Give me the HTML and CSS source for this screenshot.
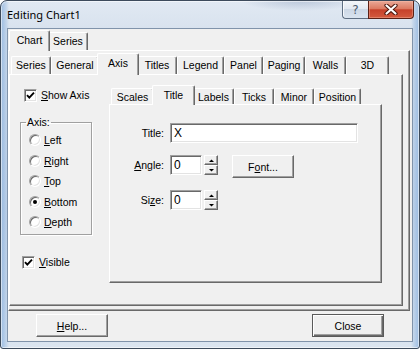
FILE: index.html
```html
<!DOCTYPE html>
<html>
<head>
<meta charset="utf-8">
<title>Editing Chart1</title>
<link rel="stylesheet" href="styles.css">
</head>
<body>
<div class="window">
  <div class="titlebar">
    <span class="title">Editing Chart1</span>
    <div class="caption">
      <div class="cap-btn cap-help">?</div>
      <div class="cap-btn cap-close">
        <svg width="14" height="11" viewBox="0 0 14 11">
          <path d="M2.5 1.5 L11.5 9.5 M11.5 1.5 L2.5 9.5" stroke="#4d160c" stroke-width="4.2" stroke-linecap="round" fill="none"/>
          <path d="M2.5 1.5 L11.5 9.5 M11.5 1.5 L2.5 9.5" stroke="#ffffff" stroke-width="2.2" stroke-linecap="round" fill="none"/>
        </svg>
      </div>
    </div>
  </div>
  <div class="client">
    <div class="tc tc-outer">
      <div class="strip strip-outer">
        <div class="tab sel w-chart">Chart</div>
        <div class="tab w-series1">Series</div>
      </div>
      <div class="panel panel-outer">
        <div class="tc tc-mid">
          <div class="strip strip-mid">
            <div class="tab w-series2">Series</div>
            <div class="tab w-general">General</div>
            <div class="tab sel w-axis">Axis</div>
            <div class="tab w-titles">Titles</div>
            <div class="tab w-legend">Legend</div>
            <div class="tab w-panel">Panel</div>
            <div class="tab w-paging">Paging</div>
            <div class="tab w-walls">Walls</div>
            <div class="tab w-3d">3D</div>
          </div>
          <div class="panel panel-mid">
            <div class="left-col">
              <div class="check-row show-axis">
                <span class="checkbox"><svg width="11" height="11" viewBox="0 0 11 11"><path d="M2 5.2 L4.3 7.6 L9 2.6" stroke="#000" stroke-width="1.9" fill="none"/></svg></span>
                <span class="lbl"><u>S</u>how Axis</span>
              </div>
              <fieldset class="group">
                <legend>Axis:</legend>
                <div class="radio-row"><span class="radio"></span><span class="lbl"><u>L</u>eft</span></div>
                <div class="radio-row"><span class="radio"></span><span class="lbl"><u>R</u>ight</span></div>
                <div class="radio-row"><span class="radio"></span><span class="lbl"><u>T</u>op</span></div>
                <div class="radio-row"><span class="radio on"></span><span class="lbl"><u>B</u>ottom</span></div>
                <div class="radio-row"><span class="radio"></span><span class="lbl"><u>D</u>epth</span></div>
              </fieldset>
              <div class="check-row visible">
                <span class="checkbox"><svg width="11" height="11" viewBox="0 0 11 11"><path d="M2 5.2 L4.3 7.6 L9 2.6" stroke="#000" stroke-width="1.9" fill="none"/></svg></span>
                <span class="lbl"><u>V</u>isible</span>
              </div>
            </div>
            <div class="tc tc-inner">
              <div class="strip strip-inner">
                <div class="tab w-scales">Scales</div>
                <div class="tab sel w-title">Title</div>
                <div class="tab w-labels">Labels</div>
                <div class="tab w-ticks">Ticks</div>
                <div class="tab w-minor">Minor</div>
                <div class="tab w-position">Position</div>
              </div>
              <div class="panel panel-inner">
                <div class="form-row">
                  <span class="flabel">Title:</span>
                  <div class="field field-title">X</div>
                </div>
                <div class="form-row">
                  <span class="flabel"><u>A</u>ngle:</span>
                  <div class="field field-num">0</div>
                  <div class="spin">
                    <div class="spin-btn"><svg width="5" height="3" viewBox="0 0 5 3"><path d="M0 3 H5 L2.5 0.5 Z" fill="#000"/></svg></div>
                    <div class="spin-btn"><svg width="5" height="3" viewBox="0 0 5 3"><path d="M0 0 H5 L2.5 2.5 Z" fill="#000"/></svg></div>
                  </div>
                  <div class="btn btn-font">F<u>o</u>nt...</div>
                </div>
                <div class="form-row">
                  <span class="flabel">Si<u>z</u>e:</span>
                  <div class="field field-num">0</div>
                  <div class="spin">
                    <div class="spin-btn"><svg width="5" height="3" viewBox="0 0 5 3"><path d="M0 3 H5 L2.5 0.5 Z" fill="#000"/></svg></div>
                    <div class="spin-btn"><svg width="5" height="3" viewBox="0 0 5 3"><path d="M0 0 H5 L2.5 2.5 Z" fill="#000"/></svg></div>
                  </div>
                </div>
              </div>
            </div>
          </div>
        </div>
      </div>
    </div>
    <div class="buttons">
      <div class="btn btn-dlg"><u>H</u>elp...</div>
      <div class="btn btn-dlg default">Close</div>
    </div>
  </div>
</div>
</body>
</html>
```

FILE: styles.css
```css
* { box-sizing: border-box; }
html, body { margin: 0; padding: 0; }
body {
  width: 420px;
  height: 349px;
  overflow: hidden;
  background: #ffffff;
  font-family: "Liberation Sans", Arial, sans-serif;
  font-size: 10.5px;
  color: #000;
}

/* ---------- window frame ---------- */
.window {
  width: 420px;
  height: 349px;
  display: flex;
  flex-direction: column;
  border: 1px solid #3d4b5c;
  border-radius: 7px 7px 3px 3px;
  background:
    radial-gradient(ellipse 60px 10px at 300px 0, rgba(90, 115, 155, 0.28), rgba(90, 115, 155, 0)),
    linear-gradient(90deg, rgba(140, 178, 222, 0.8) 0, rgba(140, 178, 222, 0.25) 6px, rgba(140, 178, 222, 0) 8px, rgba(140, 178, 222, 0) 410px, rgba(140, 178, 222, 0.25) 412px, rgba(140, 178, 222, 0.8) 418px),
    linear-gradient(180deg, #e1e9f3 0, #d8e2ee 28px, #cbd9ea 60%, #dbe5f0 100%);
  box-shadow: inset 0 0 0 1px rgba(255, 255, 255, 0.55);
}
.titlebar {
  height: 27px;
  flex: none;
  display: flex;
  justify-content: space-between;
  align-items: flex-start;
}
.title {
  margin: 7px 0 0 6px;
  font-family: "Noto Sans", "Liberation Sans", sans-serif;
  font-size: 11px;
  line-height: 14px;
  color: #000;
}
.caption {
  display: flex;
  margin-right: 5px;
}
.cap-btn {
  height: 18px;
  display: flex;
  align-items: center;
  justify-content: center;
}
.cap-help {
  width: 26px;
  border: 1px solid #5f6f83;
  border-top: none;
  border-right: none;
  border-radius: 0 0 0 4px;
  background: linear-gradient(180deg, #f3f6fa 0, #e3e9f2 45%, #cdd8e6 50%, #d9e3ef 100%);
  color: #4a5a6e;
  font-family: "DejaVu Sans", sans-serif;
  font-size: 12px;
  line-height: 16px;
  box-shadow: inset 1px 0 0 rgba(255, 255, 255, 0.8);
}
.cap-close {
  width: 46px;
  border: 1px solid #5b2015;
  border-top: none;
  border-radius: 0 0 4px 0;
  background: linear-gradient(180deg, #eaa897 0, #dc7a62 45%, #c6412a 52%, #d35a3e 100%);
  box-shadow: inset 0 0 0 1px rgba(255, 200, 180, 0.35);
}

/* ---------- client area ---------- */
.client {
  flex: 1;
  margin: 0 6px 6px;
  background: #f0f0f0;
  border: 1px solid #8093aa;
  display: flex;
  flex-direction: column;
}

/* ---------- tab controls ---------- */
.tc {
  display: flex;
  flex-direction: column;
}
.tc-outer {
  height: 282px;
  margin-right: 2px;
  flex: none;
}
.tc-mid { flex: 1; }
.tc-inner {
  width: 273px;
  height: 198px;
  flex: none;
}
.strip {
  display: flex;
  align-items: flex-end;
  position: relative;
  z-index: 1;
  margin-bottom: -1px;
  flex: none;
}
.strip-outer { height: 22px; padding-left: 3px; }
.strip-mid { height: 23px; padding-left: 2px; }
.strip-inner { height: 20px; padding-left: 2px; }

.tab {
  flex: none;
  text-align: center;
  white-space: nowrap;
  border: 1px solid;
  border-bottom: none;
  border-color: #ffffff #696969 #ffffff #ffffff;
  border-radius: 2px 2px 0 0;
  box-shadow: inset -1px 0 0 #a0a0a0;
  padding-top: 1px;
  line-height: 14px;
  margin-bottom: 1px;
  background: #f0f0f0;
  overflow: hidden;
}
.strip-outer .tab, .strip-mid .tab { height: 18px; }
.strip-inner .tab { height: 16px; }
.tab.sel {
  margin: 0 -2px;
  padding-top: 2px;
  position: relative;
  z-index: 2;
}
.strip-outer .tab.sel { height: 21px; }
.strip-mid .tab.sel { height: 22px; }
.strip-inner .tab.sel { height: 20px; }

.w-chart { width: 41px; }
.w-series1 { width: 40px; }
.w-series2 { width: 40px; }
.w-general { width: 48px; }
.w-axis { width: 42px; }
.w-titles { width: 40px; }
.w-legend { width: 47px; }
.w-panel { width: 39px; }
.w-paging { width: 42px; }
.w-walls { width: 41px; }
.w-3d { width: 43px; }
.w-scales { width: 43px; }
.w-title { width: 43px; }
.w-labels { width: 41px; }
.w-ticks { width: 40px; }
.w-minor { width: 40px; }
.w-position { width: 47px; }

.panel {
  flex: 1;
  border: 1px solid;
  border-color: #ffffff #696969 #696969 #ffffff;
  box-shadow: inset -1px -1px 0 #a0a0a0;
  background: #f0f0f0;
}
.panel-outer {
  display: flex;
  padding: 1px 6px 4px 0;
}
.panel-mid {
  display: flex;
  align-items: flex-start;
  gap: 17px;
  padding: 10px 0 0 10px;
}
.panel-inner {
  padding: 18px 0 0 0;
}

/* ---------- left column ---------- */
.left-col {
  width: 72px;
  flex: none;
  display: flex;
  flex-direction: column;
}
.check-row {
  display: flex;
  align-items: center;
  gap: 4px;
  height: 13px;
  line-height: 13px;
}
.show-axis { margin: 4px 0 0 4px; }
.visible { margin: 21px 0 0 2px; gap: 4px; }
.checkbox {
  width: 13px;
  height: 13px;
  flex: none;
  background: #fff;
  border: 1px solid;
  border-color: #a0a0a0 #ffffff #ffffff #a0a0a0;
  box-shadow: inset 1px 1px 0 #696969, inset -1px -1px 0 #e3e3e3;
  display: flex;
  align-items: center;
  justify-content: center;
}
.checkbox svg { display: block; }
.lbl { white-space: nowrap; }

.group {
  margin: 14px 0 0 0;
  padding: 2px 0 1.5px 5px;
  width: 72px;
  min-width: 0;
  border: 1px solid #a0a0a0;
  box-shadow: inset 1px 1px 0 #ffffff, 1px 1px 0 #ffffff;
}
.group legend {
  padding: 0 1px;
  line-height: 12px;
  font-size: 10.5px;
}
.radio-row {
  height: 20.5px;
  display: flex;
  align-items: center;
  gap: 3px;
  padding-left: 3px;
}
.radio {
  width: 12px;
  height: 12px;
  flex: none;
  border-radius: 50%;
  border: 1px solid;
  border-color: #a0a0a0 #ffffff #ffffff #a0a0a0;
  background: #fff;
  box-shadow: inset 1px 1px 0 #696969, inset -1px -1px 0 #e3e3e3;
  display: flex;
  align-items: center;
  justify-content: center;
}
.radio.on::after {
  content: "";
  width: 4px;
  height: 4px;
  border-radius: 50%;
  background: #000;
}

/* ---------- form in Title page ---------- */
.form-row {
  display: flex;
  align-items: flex-start;
  margin-bottom: 12px;
}
.flabel {
  width: 54px;
  margin-right: 6px;
  text-align: right;
  line-height: 20px;
  height: 20px;
  flex: none;
}
.field {
  height: 20px;
  background: #fff;
  border: 1px solid;
  border-color: #a0a0a0 #ffffff #ffffff #a0a0a0;
  box-shadow: inset 1px 1px 0 #696969, inset -1px -1px 0 #e3e3e3;
  padding: 0 3px;
  font-size: 12px;
  line-height: 18px;
  flex: none;
}
.field-title { width: 188px; }
.field-num { width: 32px; }
.spin {
  width: 14px;
  height: 20px;
  margin-left: 2px;
  display: flex;
  flex-direction: column;
  flex: none;
}
.spin-btn {
  height: 10px;
  border: 1px solid;
  border-color: #ffffff #696969 #696969 #ffffff;
  box-shadow: inset -1px -1px 0 #a0a0a0;
  background: #f0f0f0;
  display: flex;
  align-items: center;
  justify-content: center;
}
.spin-btn svg { display: block; }

.btn {
  border: 1px solid;
  border-color: #ffffff #696969 #696969 #ffffff;
  box-shadow: inset -1px -1px 0 #a0a0a0;
  background: #f0f0f0;
  display: flex;
  align-items: center;
  justify-content: center;
  white-space: nowrap;
  flex: none;
}
.btn-font {
  width: 62px;
  height: 23px;
  margin-left: 14px;
}

/* ---------- bottom buttons ---------- */
.buttons {
  flex: 1;
  display: flex;
  justify-content: space-between;
  align-items: flex-start;
  padding: 3px 28px 0 28px;
}
.btn-dlg {
  width: 72px;
  height: 23px;
}
.btn-dlg.default {
  border: 1px solid #5a5a5a;
  box-shadow: inset 1px 1px 0 #ffffff, inset -1px -1px 0 #696969, inset -2px -2px 0 #a0a0a0;
}
```
